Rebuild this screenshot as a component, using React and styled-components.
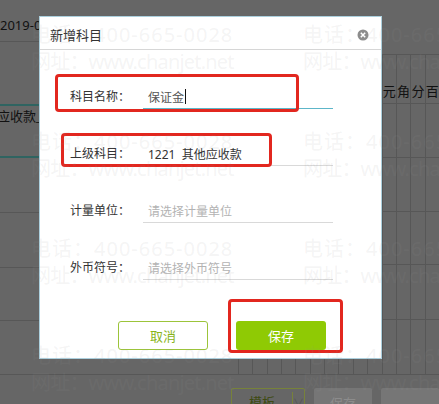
import React from "react";
import styled, { createGlobalStyle } from "styled-components";

const GlobalStyle = createGlobalStyle`
  html, body {
    margin: 0;
    padding: 0;
    background: #666666;
    font-family: "Noto Sans", "Noto Sans CJK SC", sans-serif;
  }
`;

const COLORS = {
  OVERLAY: "#666666",
  LINE: "#575757",
  TEAL: "#2f6461",
  RED: "#e2271f",
  GREEN: "#8fca04",
  OLIVE: "#9cc43a",
  TEXT: "#333333",
  HINT: "#b3b3b3",
};

const DIGITS = ["百", "十", "亿", "千", "百", "十", "万", "千", "百", "十", "元", "角", "分", "百"];

const LEFT_ROWS = [
  { h: 42, line: COLORS.LINE, w: 1, text: "2019-01-31", align: "flex-end", pad: "0 0 7px 0" },
  { h: 64, line: COLORS.TEAL, w: 2 },
  { h: 52, line: COLORS.TEAL, w: 2, text: "应收款_保证金", align: "flex-start", pad: "0 0 0 0" },
  { h: 55, line: COLORS.LINE, w: 1 },
  { h: 55, line: COLORS.LINE, w: 1 },
  { h: 53, line: COLORS.LINE, w: 1 },
  { h: 54, line: COLORS.LINE, w: 1 },
];

const TABLE_ROWS = [54, 54, 53, 55, 55];

function App() {
  return (
    <>
      <GlobalStyle />
      <Page>
        <Sheet>
          <LeftPane>
            {LEFT_ROWS.map((r, i) => (
              <LeftRow key={i} $h={r.h} $line={r.line} $w={r.w} $align={r.align} $pad={r.pad}>
                {r.text && <RowText $indent={i === 2 ? -3 : 0}>{r.text}</RowText>}
              </LeftRow>
            ))}
          </LeftPane>
          <TablePane>
            <TableTop />
            <HeaderRow>
              {DIGITS.map((d, i) => (
                <HeaderCell key={i}>{d}</HeaderCell>
              ))}
            </HeaderRow>
            {TABLE_ROWS.map((h, i) => (
              <BodyRow key={i} $h={h}>
                {DIGITS.map((_, j) => (
                  <BodyCell key={j} />
                ))}
              </BodyRow>
            ))}
          </TablePane>
        </Sheet>
        <Toolbar>
          <SplitButton>
            <SplitLabel>模板</SplitLabel>
            <SplitArrow>∨</SplitArrow>
          </SplitButton>
          <GreyButton>保存</GreyButton>
          <GreyButton />
        </Toolbar>

        <Dialog>
          <DialogHeader>
            <DialogTitle>新增科目</DialogTitle>
            <svg width="12" height="12" viewBox="0 0 12 12">
              <circle cx="6" cy="6" r="5.5" fill="#8c8c8c" />
              <path d="M3.8 3.8 L8.2 8.2 M8.2 3.8 L3.8 8.2" stroke="#fff" strokeWidth="1.5" />
            </svg>
          </DialogHeader>
          <DialogBody>
            <FormRow>
              <Label>科目名称：</Label>
              <Field $active>
                保证金
                <Caret />
              </Field>
            </FormRow>
            <FormRow>
              <Label>上级科目：</Label>
              <Field>1221&nbsp;&nbsp;其他应收款</Field>
            </FormRow>
            <FormRow>
              <Label>计量单位：</Label>
              <Field $hint>请选择计量单位</Field>
            </FormRow>
            <FormRow>
              <Label>外币符号：</Label>
              <Field $hint>请选择外币符号</Field>
            </FormRow>
            <Footer>
              <CancelButton>取消</CancelButton>
              <SaveButton>保存</SaveButton>
            </Footer>
          </DialogBody>
          <Mark $l={15} $t={57} $w={244} $h={38} />
          <Mark $l={21} $t={116} $w={211} $h={34} />
          <Mark $l={188} $t={282} $w={115} $h={54} />
        </Dialog>

        <Watermark>
          {Array.from({ length: 8 }).map((_, i) => (
            <Stamp key={i}>
              <StampLine $spacing={1}>电话：400-665-0028</StampLine>
              <StampLine $spacing={-0.8}>网址：www.chanjet.net</StampLine>
            </Stamp>
          ))}
        </Watermark>
      </Page>
    </>
  );
}

const Page = styled.div`
  position: relative;
  width: 439px;
  height: 404px;
  overflow: hidden;
  background: ${COLORS.OVERLAY};
  display: flex;
  flex-direction: column;
`;

const Sheet = styled.div`
  display: flex;
  height: 375px;
  flex-shrink: 0;
`;

const LeftPane = styled.div`
  width: 238px;
  display: flex;
  flex-direction: column;
`;

const LeftRow = styled.div`
  box-sizing: border-box;
  flex-shrink: 0;
  height: ${p => p.$h}px;
  border-bottom: ${p => p.$w}px solid ${p => p.$line};
  display: flex;
  align-items: ${p => p.$align || "center"};
  padding: ${p => p.$pad || 0};
`;

const RowText = styled.span`
  margin-left: ${p => p.$indent}px;
  font-size: 13px;
  color: #111;
  white-space: nowrap;
`;

const TablePane = styled.div`
  flex: 1;
  display: flex;
  flex-direction: column;
`;

const TableTop = styled.div`
  height: 55px;
  flex-shrink: 0;
  box-sizing: border-box;
  border-bottom: 1px solid ${COLORS.LINE};
`;

const HeaderRow = styled.div`
  display: grid;
  grid-template-columns: repeat(14, 1fr);
  flex-shrink: 0;
  height: 49px;
  box-sizing: border-box;
  border-bottom: 1px solid ${COLORS.LINE};
`;

const HeaderCell = styled.div`
  border-left: 1px solid ${COLORS.LINE};
  display: flex;
  align-items: flex-end;
  justify-content: center;
  padding-bottom: 3px;
  font-size: 13px;
  color: #111;
`;

const BodyRow = styled.div`
  display: grid;
  grid-template-columns: repeat(14, 1fr);
  flex-shrink: 0;
  height: ${p => p.$h}px;
  box-sizing: border-box;
  border-bottom: 1px solid ${COLORS.LINE};
`;

const BodyCell = styled.div`
  border-left: 1px solid ${COLORS.LINE};
`;

const Toolbar = styled.div`
  flex: 1;
  display: flex;
  align-items: flex-start;
  padding: 13px 0 0 231px;
  gap: 9px;
`;

const SplitButton = styled.div`
  width: 87px;
  height: 28px;
  box-sizing: border-box;
  border: 1px solid #77823a;
  border-radius: 2px;
  display: flex;
  align-items: center;
`;

const SplitLabel = styled.div`
  width: 60px;
  text-align: center;
  font-size: 13px;
  color: #3e4a12;
  border-right: 1px solid #77823a;
  line-height: 20px;
`;

const SplitArrow = styled.div`
  flex: 1;
  text-align: center;
  font-size: 11px;
  color: #555;
`;

const GreyButton = styled.div`
  width: 89px;
  height: 28px;
  background: #767676;
  border-radius: 2px;
  color: #8c8c8c;
  font-size: 13px;
  display: flex;
  align-items: center;
  justify-content: center;
`;

const Dialog = styled.div`
  position: absolute;
  left: 39px;
  top: 16px;
  width: 343px;
  height: 343px;
  box-sizing: border-box;
  background: #fff;
  border: 1px solid #acd0de;
`;

const DialogHeader = styled.div`
  height: 33px;
  box-sizing: border-box;
  border-bottom: 1px solid #d6d6d6;
  display: flex;
  align-items: center;
  justify-content: space-between;
  padding: 3px 12px 0 10px;
`;

const DialogTitle = styled.div`
  font-size: 13px;
  color: ${COLORS.TEXT};
`;

const DialogBody = styled.div`
  display: flex;
  flex-direction: column;
  gap: 33px;
  padding: 35px 0 0 30px;
`;

const FormRow = styled.div`
  display: flex;
  align-items: center;
  height: 24px;
`;

const Label = styled.div`
  width: 73px;
  font-size: 12px;
  color: ${COLORS.TEXT};
  margin-top: -2px;
`;

const Field = styled.div`
  width: 190px;
  height: 24px;
  box-sizing: border-box;
  padding-left: 5px;
  display: flex;
  align-items: center;
  font-size: 12px;
  white-space: pre;
  color: ${p => (p.$hint ? COLORS.HINT : p.$active ? "#555" : COLORS.TEXT)};
  border-bottom: 1px solid ${p => (p.$active ? "#5db6c9" : "#d9d9d9")};
`;

const Caret = styled.span`
  display: inline-block;
  width: 1px;
  height: 15px;
  background: #111;
  margin-left: 1px;
`;

const Footer = styled.div`
  display: flex;
  gap: 28px;
  margin-top: 8px;
  padding-left: 48px;
`;

const CancelButton = styled.div`
  width: 90px;
  height: 29px;
  box-sizing: border-box;
  border: 1px solid ${COLORS.OLIVE};
  border-radius: 3px;
  color: #89b41a;
  font-size: 13px;
  display: flex;
  align-items: center;
  justify-content: center;
`;

const SaveButton = styled.div`
  width: 90px;
  height: 29px;
  background: ${COLORS.GREEN};
  border-radius: 3px;
  color: #fff;
  font-size: 13px;
  display: flex;
  align-items: center;
  justify-content: center;
`;

const Mark = styled.div`
  position: absolute;
  left: ${p => p.$l}px;
  top: ${p => p.$t}px;
  width: ${p => p.$w}px;
  height: ${p => p.$h}px;
  box-sizing: border-box;
  border: 3px solid ${COLORS.RED};
  border-radius: 4px;
`;

const Watermark = styled.div`
  position: absolute;
  inset: 0;
  pointer-events: none;
  display: grid;
  grid-template-columns: repeat(2, 272px);
  grid-auto-rows: 107px;
  padding: 21px 0 0 31px;
`;

const Stamp = styled.div`
  font-family: "Noto Sans", "Noto Sans CJK SC", sans-serif;
  font-size: 20px;
  line-height: 27px;
  white-space: nowrap;
  color: rgba(150, 150, 150, 0.11);
`;

const StampLine = styled.div`
  letter-spacing: ${p => p.$spacing}px;
`;

export default App;
